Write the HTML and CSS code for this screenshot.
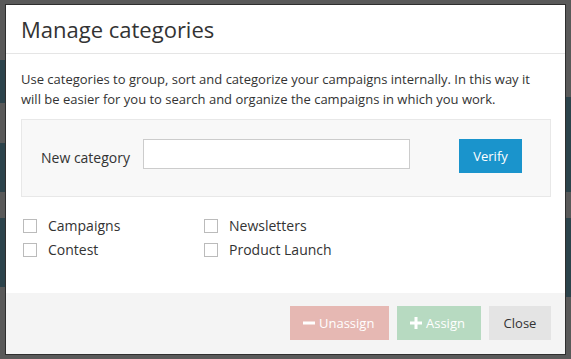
FILE: index.html
```html
<!DOCTYPE html>
<html>

<head>
    <title>Manage categories</title>
    <link rel="stylesheet" href="styles.css">
</head>

<body>
    <div class="modal">
        <div class="modal-header">
            <h2>Manage categories</h2>
        </div>

        <div class="modal-body">
            <p class="intro">Use categories to group, sort and categorize your campaigns internally. In this way it will be easier for you to search and organize the campaigns in which you work.</p>

            <div class="new-category">
                <label for="newCategory">New category</label>
                <input type="text" id="newCategory">
                <button class="btn btn-verify">Verify</button>
            </div>

            <div class="category-list">
                <label class="check"><span class="box"></span>Campaigns</label>
                <label class="check"><span class="box"></span>Newsletters</label>
                <label class="check"><span class="box"></span>Contest</label>
                <label class="check"><span class="box"></span>Product Launch</label>
            </div>
        </div>

        <div class="modal-footer">
            <button class="btn btn-unassign">
                <svg width="12" height="12" viewBox="0 0 12 12"><rect x="0" y="4.5" width="12" height="3" fill="#fff"/></svg>
                Unassign
            </button>
            <button class="btn btn-assign">
                <svg width="12" height="12" viewBox="0 0 12 12"><rect x="0" y="4.5" width="12" height="3" fill="#fff"/><rect x="4.5" y="0" width="3" height="12" fill="#fff"/></svg>
                Assign
            </button>
            <button class="btn btn-close">Close</button>
        </div>
    </div>
</body>

</html>
```

FILE: styles.css
```css
body {
    margin: 0;
    font-family: "Open Sans", Arial, sans-serif;
    color: #333;
    background:
        linear-gradient(to bottom, transparent 60px, #2c434b 60px, #2c434b 103px, transparent 103px, transparent 143px, #2c434b 143px, #2c434b 192px, transparent 192px, transparent 218px, #2c434b 218px, #2c434b 287px, transparent 287px) left top / 5px 100% no-repeat,
        linear-gradient(to bottom, transparent 97px, #2c434b 97px, #2c434b 192px, transparent 192px, transparent 218px, #2c434b 218px, #2c434b 297px, transparent 297px) right top / 5px 100% no-repeat,
        #595959;
    height: 359px;
    overflow: hidden;
}

.modal {
    margin: 4px 0 0 5px;
    width: 559px;
    height: 349px;
    border: 1px solid #2e2e2e;
    background: #fff;
    display: flex;
    flex-direction: column;
}

.modal-header {
    padding: 9px 15px;
    border-bottom: 1px solid #e5e5e5;
}

.modal-header h2 {
    margin: 0;
    font-size: 22px;
    font-weight: normal;
    line-height: 30px;
    color: #333;
}

.modal-body {
    flex: 1;
    padding: 15px 14px 0 15px;
}

.intro {
    margin: 0 0 10px;
    font-size: 13px;
    line-height: 20px;
}

.new-category {
    display: flex;
    align-items: flex-start;
    padding: 19px;
    background: #f8f8f8;
    border: 1px solid #e8e8e8;
}

.new-category label {
    font-size: 14px;
    line-height: 38px;
    width: 102px;
}

.new-category input {
    width: 267px;
    height: 30px;
    box-sizing: border-box;
    border: 1px solid #ccc;
    margin: 0;
}

.btn {
    border: 0;
    height: 34px;
    font-family: "Open Sans", Arial, sans-serif;
    font-size: 13px;
    color: #fff;
    padding: 0 13px;
    display: inline-flex;
    align-items: center;
    gap: 4px;
}

.btn-verify {
    margin-left: 49px;
    width: 63px;
    justify-content: center;
    background: #1a94cc;
}

.category-list {
    display: grid;
    grid-template-columns: 181px 181px;
    row-gap: 10px;
    margin: 22px 0 0 2px;
}

.check {
    display: flex;
    align-items: center;
    font-size: 14px;
    line-height: 14px;
}

.box {
    width: 12px;
    height: 12px;
    border: 1px solid #bbb;
    margin-right: 11px;
    background: #fff;
}

.modal-footer {
    display: flex;
    justify-content: flex-end;
    gap: 8px;
    padding: 13px 14px 14px;
    background: #f4f4f4;
}

.btn-unassign {
    width: 99px;
    background: #e6b8b3;
}

.btn-assign {
    width: 84px;
    background: #b7dac1;
}

.btn-close {
    width: 62px;
    justify-content: center;
    background: #e4e4e4;
    color: #333;
}
```
